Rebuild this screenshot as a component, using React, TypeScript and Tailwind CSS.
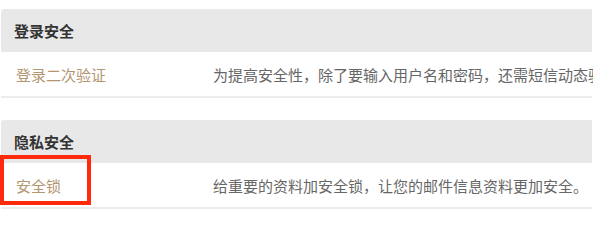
import React from "react";

const font = { fontFamily: '"Noto Sans CJK SC", "Noto Sans", sans-serif' };

function Section({
  title,
  label,
  desc,
  highlight,
}: {
  title: string;
  label: string;
  desc: string;
  highlight?: boolean;
}) {
  return (
    <div className="relative">
      <div className="h-[43px] bg-[#e8e8e8] rounded-tl-[3px] flex items-center pl-[13px] text-[15px] font-bold text-[#333333] leading-none">
        {title}
      </div>
      <div className="h-[44px] flex items-center text-[15px] leading-none whitespace-nowrap">
        <div className="w-[212px] shrink-0 pl-[15px] text-[#b39572]">{label}</div>
        <div className="text-[#666666]">{desc}</div>
      </div>
      <div className="h-[2px] bg-[#ececec]" />
      {highlight && (
        <div className="absolute left-[-1px] top-[35px] w-[91px] h-[50px] border-[4px] border-[#ff2a0c] pointer-events-none" />
      )}
    </div>
  );
}

export default function App() {
  return (
    <div className="w-[593px] h-[230px] bg-white overflow-hidden pt-[9px] px-[1px]" style={font}>
      <div className="flex flex-col gap-[22px]">
        <Section
          title="登录安全"
          label="登录二次验证"
          desc="为提高安全性，除了要输入用户名和密码，还需短信动态验证码才能登录。"
        />
        <Section
          title="隐私安全"
          label="安全锁"
          desc="给重要的资料加安全锁，让您的邮件信息资料更加安全。"
          highlight
        />
      </div>
    </div>
  );
}
